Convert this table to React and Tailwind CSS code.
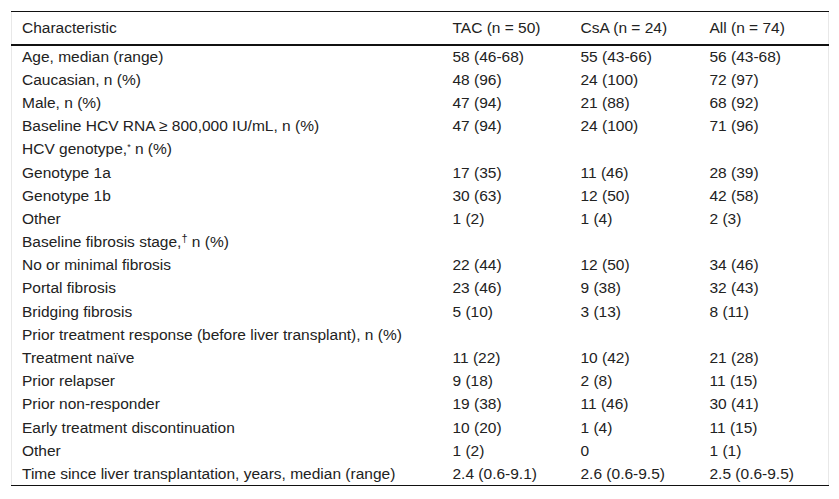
const rows = [
  ["Age, median (range)", "58 (46-68)", "55 (43-66)", "56 (43-68)"],
  ["Caucasian, n (%)", "48 (96)", "24 (100)", "72 (97)"],
  ["Male, n (%)", "47 (94)", "21 (88)", "68 (92)"],
  ["Baseline HCV RNA ≥ 800,000 IU/mL, n (%)", "47 (94)", "24 (100)", "71 (96)"],
  [<>HCV genotype,<sup className="text-[9px]">*</sup> n (%)</>, "", "", ""],
  ["Genotype 1a", "17 (35)", "11 (46)", "28 (39)"],
  ["Genotype 1b", "30 (63)", "12 (50)", "42 (58)"],
  ["Other", "1 (2)", "1 (4)", "2 (3)"],
  [<>Baseline fibrosis stage,<sup className="text-[11px]">†</sup> n (%)</>, "", "", ""],
  ["No or minimal fibrosis", "22 (44)", "12 (50)", "34 (46)"],
  ["Portal fibrosis", "23 (46)", "9 (38)", "32 (43)"],
  ["Bridging fibrosis", "5 (10)", "3 (13)", "8 (11)"],
  ["Prior treatment response (before liver transplant), n (%)", "", "", ""],
  ["Treatment naïve", "11 (22)", "10 (42)", "21 (28)"],
  ["Prior relapser", "9 (18)", "2 (8)", "11 (15)"],
  ["Prior non-responder", "19 (38)", "11 (46)", "30 (41)"],
  ["Early treatment discontinuation", "10 (20)", "1 (4)", "11 (15)"],
  ["Other", "1 (2)", "0", "1 (1)"],
  ["Time since liver transplantation, years, median (range)", "2.4 (0.6-9.1)", "2.6 (0.6-9.5)", "2.5 (0.6-9.5)"],
];

export default function App() {
  return (
    <div className="min-h-[499px] bg-white pl-[11px] pt-[11px] font-['Liberation_Sans',Arial,sans-serif] text-[15.5px] text-[#222]">
      <table className="w-[817px] table-fixed border-collapse border-x border-x-[#e8e8e8]">
        <colgroup>
          <col className="w-[431px]" />
          <col className="w-[128px]" />
          <col className="w-[129px]" />
          <col className="w-[129px]" />
        </colgroup>
        <thead>
          <tr className="h-[33px] border-t border-t-[#111] border-b-2 border-b-[#111]">
            <th className="px-[10px] text-left font-normal">Characteristic</th>
            <th className="px-[10px] text-left font-normal">TAC (n = 50)</th>
            <th className="px-[10px] text-left font-normal">CsA (n = 24)</th>
            <th className="px-[10px] text-left font-normal">All (n = 74)</th>
          </tr>
        </thead>
        <tbody className="border-b border-b-[#111]">
          {rows.map((r, i) => (
            <tr key={i} className="h-[23.2px]">
              {r.map((c, j) => (
                <td key={j} className="whitespace-nowrap px-[10px] py-0 align-middle leading-[17px]">
                  {c}
                </td>
              ))}
            </tr>
          ))}
        </tbody>
      </table>
    </div>
  );
}
